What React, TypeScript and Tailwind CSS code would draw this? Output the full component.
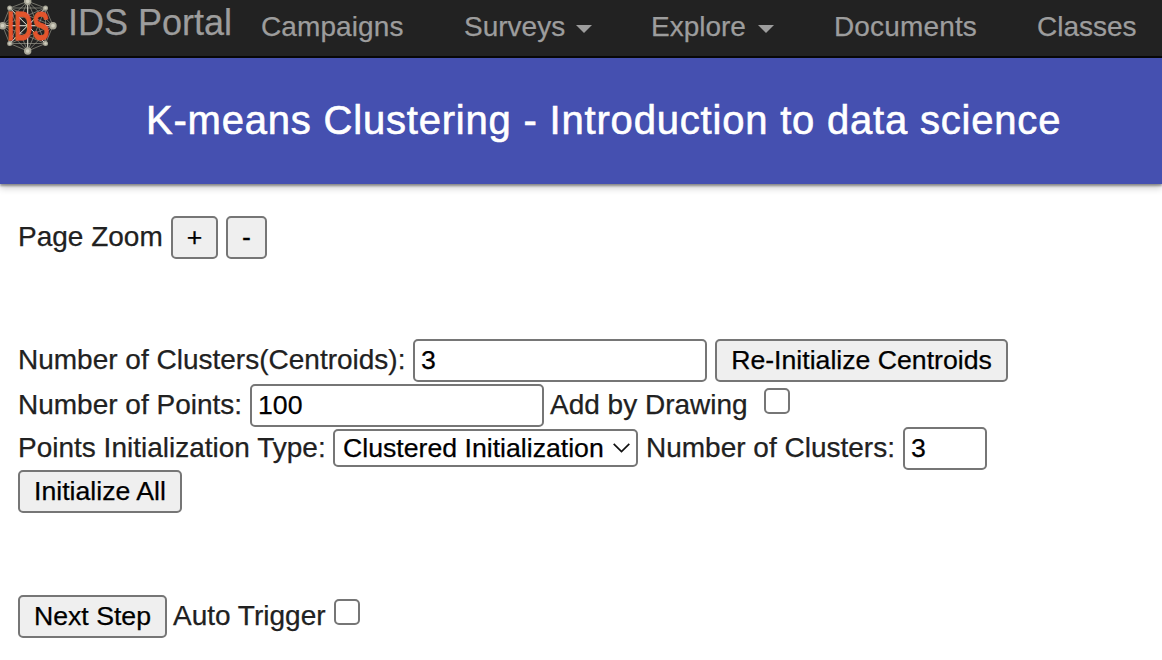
import React from "react";

const nodes: [number, number, number][] = [
  [27.7, 1.3, 3.7],
  [45.5, 8, 2.5],
  [53, 25.7, 3.7],
  [45.5, 43.5, 2.5],
  [27.7, 51, 3.7],
  [9.7, 43.5, 2.5],
  [2.5, 25.7, 3.7],
  [9.7, 8, 2.5],
];

function Logo() {
  return (
    <svg className="h-[56px] w-[58px] shrink-0" viewBox="0 0 58 56" aria-hidden="true">
      <g stroke="#b5b3a4" strokeWidth="0.7" opacity="0.8">
        {nodes.flatMap((a, i) =>
          nodes.slice(i + 1).map((b, j) => (
            <line key={`${i}-${j}`} x1={a[0]} y1={a[1]} x2={b[0]} y2={b[1]} />
          )),
        )}
      </g>
      <g stroke="#d8d6ca" strokeWidth="1">
        <path d="M27.7 1v50M2.5 25.7H53M9.7 8l35.8 35.5M45.5 8L9.7 43.5" />
      </g>
      {nodes.map(([x, y, r]) => (
        <g key={`${x}-${y}`}>
          <circle cx={x} cy={y} r={r} fill="#a8a697" />
          <circle cx={x} cy={y} r={r * 0.5} fill="#d0cebf" />
        </g>
      ))}
      <text
        transform="translate(7 39.8) scale(0.63 1)"
        className="font-['Liberation_Sans',Arial,sans-serif] text-[40px] font-bold"
        fill="#e2552c"
        stroke="#e2552c"
        strokeWidth="0.8"
      >
        IDS
      </text>
    </svg>
  );
}

function Caret() {
  return (
    <svg className="mt-[4px] ml-auto h-[8px] w-[16px]" viewBox="0 0 16 8" fill="#9d9d9d">
      <path d="M0 0h16L8 8z" />
    </svg>
  );
}

function NavItem({ label, caret, className }: { label: string; caret?: boolean; className: string }) {
  return (
    <a href="#" className={`flex h-[53px] shrink-0 items-center text-[28px] leading-[32px] ${className}`}>
      {label}
      {caret && <Caret />}
    </a>
  );
}

function Button({ children, className }: { children: React.ReactNode; className: string }) {
  return (
    <button
      className={`flex h-[43px] shrink-0 items-center justify-center rounded-[5px] border-2 border-[#767676] bg-[#efefef] pb-[2px] text-[26.67px] leading-[30px] text-black ${className}`}
    >
      {children}
    </button>
  );
}

function Field({ value, className }: { value: string; className: string }) {
  return (
    <input
      type="text"
      defaultValue={value}
      className={`h-[43px] shrink-0 rounded-[5px] border-2 border-[#767676] bg-white px-[6px] text-[26.67px] text-black ${className}`}
    />
  );
}

function Check({ className }: { className: string }) {
  return (
    <input
      type="checkbox"
      className={`size-[26px] shrink-0 appearance-none rounded-[5px] border-2 border-[#767676] bg-white ${className}`}
    />
  );
}

function Label({ children, className = "" }: { children: React.ReactNode; className?: string }) {
  return <span className={`shrink-0 pb-[2px] leading-[32px] ${className}`}>{children}</span>;
}

export default function App() {
  return (
    <div className="h-[660px] w-[1162px] overflow-hidden bg-white font-['Liberation_Sans',Arial,sans-serif] whitespace-nowrap text-[#212121] [-webkit-text-stroke:0.25px_currentColor]">
      <nav className="flex h-[58px] items-start overflow-hidden border-b-2 border-[#080808] bg-[#222222] text-[#9d9d9d]">
        <Logo />
        <a href="#" className="ml-[10px] flex h-[46px] w-[164px] shrink-0 items-center text-[36px]">
          IDS Portal
        </a>
        <NavItem label="Campaigns" className="ml-[29px] w-[143px] tracking-[0.1px]" />
        <NavItem label="Surveys" caret className="ml-[60px] w-[128px]" />
        <NavItem label="Explore" caret className="ml-[59px] w-[123px]" />
        <NavItem label="Documents" className="ml-[60px] w-[143px] tracking-[0.15px]" />
        <NavItem label="Classes" className="ml-[60px] w-[100px]" />
      </nav>
      <header className="relative flex h-[126px] items-center bg-[#4550b0] pb-[2px] pl-[146px] shadow-[0_2px_2px_rgba(0,0,0,0.35),0_4px_7px_rgba(0,0,0,0.2)]">
        <h1 className="text-[40px] leading-[46px] tracking-[0.8px] text-white [-webkit-text-stroke:0.6px_currentColor]">
          K-means Clustering - Introduction to data science
        </h1>
      </header>
      <main className="flex flex-col pt-[32px] pl-[18px] text-[28px]">
        <div className="flex h-[43px] items-center">
          <Label className="w-[153px]">Page Zoom</Label>
          <Button className="w-[47px]">+</Button>
          <Button className="ml-[8px] w-[41px]">-</Button>
        </div>
        <div className="mt-[80px] flex h-[43px] items-center">
          <Label className="w-[395px]">Number of Clusters(Centroids):</Label>
          <Field value="3" className="w-[294px]" />
          <Button className="ml-[8px] w-[293px]">Re-Initialize Centroids</Button>
        </div>
        <div className="mt-[2px] flex h-[43px] items-center">
          <Label className="w-[232px]">Number of Points:</Label>
          <Field value="100" className="w-[294px]" />
          <Label className="ml-[6px] w-[214px]">Add by Drawing</Label>
          <Check className="mb-[10px]" />
        </div>
        <div className="flex h-[43px] items-center">
          <Label className="w-[315px]">Points Initialization Type:</Label>
          <div className="mb-[2px] grid h-[38px] w-[305px] shrink-0 items-center">
            <select className="col-start-1 row-start-1 h-[38px] w-full appearance-none rounded-[5px] border-2 border-[#767676] bg-white pl-[8px] text-[26.67px] leading-[32px] text-black">
              <option>Clustered Initialization</option>
            </select>
            <svg
              className="pointer-events-none col-start-1 row-start-1 mr-[8px] h-[10px] w-[17px] justify-self-end"
              viewBox="0 0 17 10"
              fill="none"
              stroke="#111111"
              strokeWidth="1.7"
            >
              <path d="M0.7 0.8l7.8 7.8 7.8-7.8" />
            </svg>
          </div>
          <Label className="ml-[8px] w-[257px]">Number of Clusters:</Label>
          <Field value="3" className="w-[84px]" />
        </div>
        <div className="flex h-[43px] items-center">
          <Button className="w-[164px]">Initialize All</Button>
        </div>
        <div className="mt-[82px] flex h-[43px] items-center">
          <Button className="w-[149px]">Next Step</Button>
          <Label className="ml-[6px] w-[161px]">Auto Trigger</Label>
          <Check className="mb-[10px]" />
        </div>
      </main>
    </div>
  );
}
